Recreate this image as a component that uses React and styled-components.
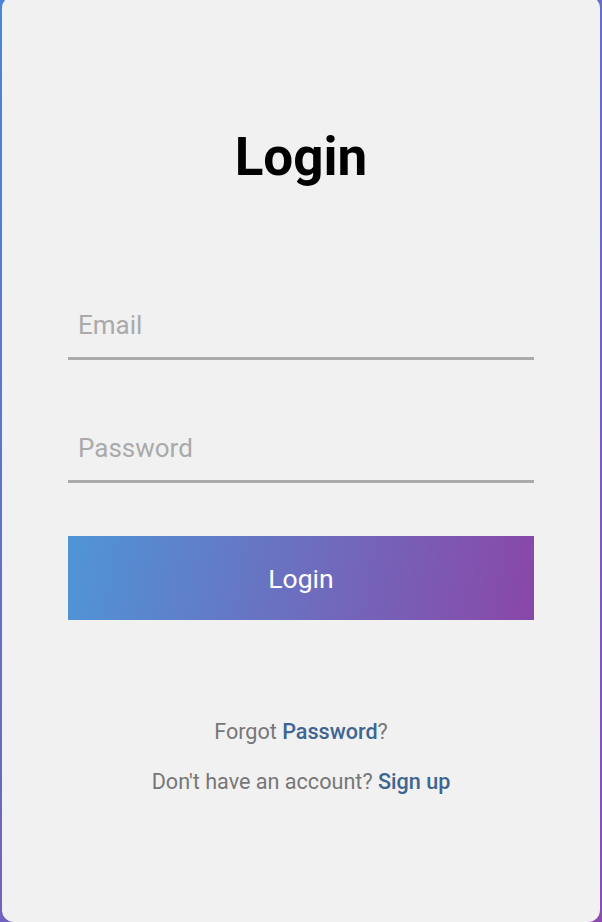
import * as React from 'react';
import styled, { createGlobalStyle } from 'styled-components';

const GlobalStyle = createGlobalStyle`
  html, body {
    margin: 0;
    padding: 0;
    height: 922px;
    overflow: hidden;
  }
  body {
    background: linear-gradient(135deg, #4a86d8, #8a4cb2);
    font-family: Roboto, "Liberation Sans", sans-serif;
  }
`;

const Page = styled('div')`
  display: flex;
  justify-content: center;
  padding: 0 2px;
`;

const Card = styled('form')`
  flex: 1;
  height: 926px;
  margin-top: -4px;
  background: #f1f1f1;
  border-radius: 12px;
  display: flex;
  flex-direction: column;
  padding: 0 66px;
  box-sizing: border-box;
`;

const Title = styled('h1')`
  margin: 129px 0 0;
  font-size: 53px;
  font-weight: 700;
  line-height: 64px;
  text-align: center;
  color: #000;
`;

const Fields = styled('div')`
  display: flex;
  flex-direction: column;
  gap: 63px;
  margin-top: 111px;
`;

const Input = styled('input')`
  height: 60px;
  box-sizing: border-box;
  padding: 0 10px 8px;
  border: none;
  border-bottom: 3px solid #aaaaaa;
  background: transparent;
  font-family: Roboto, "Liberation Sans", sans-serif;
  font-size: 26px;
  color: #333;
  outline: none;

  &::placeholder {
    color: #aaaaaa;
  }
`;

const Button = styled('button')`
  margin-top: 53px;
  height: 84px;
  border: none;
  background: linear-gradient(100deg, #4f95d6, #8a47a8);
  color: #fff;
  font-family: Roboto, "Liberation Sans", sans-serif;
  font-size: 26.5px;
  cursor: pointer;
`;

const Links = styled('div')`
  display: flex;
  flex-direction: column;
  align-items: center;
  gap: 26px;
  margin-top: 100px;
`;

const Note = styled('p')`
  margin: 0;
  font-size: 21.6px;
  line-height: 24px;
  color: #777;
`;

const Link = styled('a')`
  color: #3f6592;
  font-weight: 500;
  text-decoration: none;
`;

export default function App() {
  return (
    <>
      <GlobalStyle />
      <Page>
        <Card onSubmit={e => e.preventDefault()}>
          <Title>Login</Title>
          <Fields>
            <Input type="email" placeholder="Email" />
            <Input type="password" placeholder="Password" />
          </Fields>
          <Button type="submit">Login</Button>
          <Links>
            <Note>
              Forgot <Link href="#">Password</Link>?
            </Note>
            <Note>
              Don't have an account? <Link href="#">Sign up</Link>
            </Note>
          </Links>
        </Card>
      </Page>
    </>
  );
}
